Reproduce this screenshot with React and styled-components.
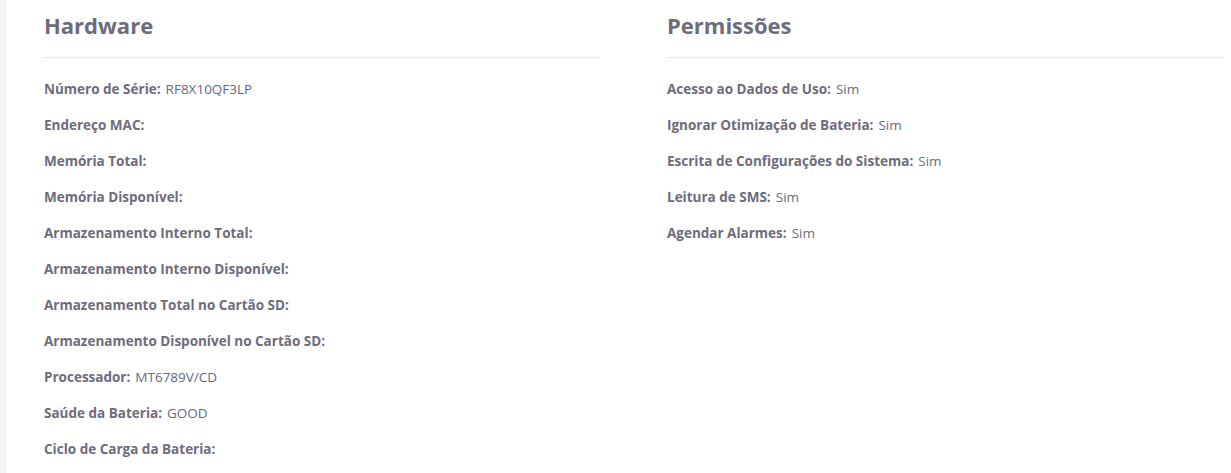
import styled, { createGlobalStyle } from "styled-components";

const GlobalStyle = createGlobalStyle`
  html, body {
    margin: 0;
    padding: 0;
    background: #ffffff;
  }
  body {
    font-family: "Open Sans", "Liberation Sans", sans-serif;
  }
`

const Page = styled.div`
  display: flex;
  min-height: 473px;
  background: #ffffff;
`

const SideStrip = styled.div`
  width: 6px;
  flex-shrink: 0;
  background: #f3f3f7;
`

const Columns = styled.div`
  flex: 1;
  display: grid;
  grid-template-columns: 556px 557px;
  column-gap: 67px;
  padding-left: 38px;
`

const Section = styled.section`
  display: flex;
  flex-direction: column;
`

const Title = styled.h2`
  margin: 0;
  padding-top: 10px;
  height: 57px;
  box-sizing: border-box;
  font-size: 22px;
  line-height: 30px;
  font-weight: 700;
  color: #6e6b7b;
`

const Divider = styled.hr`
  margin: 0;
  border: none;
  border-top: 1px solid #e6e6e9;
`

const List = styled.div`
  display: flex;
  flex-direction: column;
  padding-top: 13px;
`

const Row = styled.div`
  height: 36px;
  display: flex;
  align-items: center;
  font-size: 13.5px;
  color: #6e6b7b;
`

const Label = styled.span`
  font-weight: 700;
  margin-right: 5px;
`

const Value = styled.span`
  font-weight: 400;
  color: ${({ $tone }) => ($tone === "blue" ? "#5e6b82" : "#6e6b7b")};
`

const hardware = [
  ["Número de Série:", "RF8X10QF3LP"],
  ["Endereço MAC:", ""],
  ["Memória Total:", ""],
  ["Memória Disponível:", ""],
  ["Armazenamento Interno Total:", ""],
  ["Armazenamento Interno Disponível:", ""],
  ["Armazenamento Total no Cartão SD:", ""],
  ["Armazenamento Disponível no Cartão SD:", ""],
  ["Processador:", "MT6789V/CD"],
  ["Saúde da Bateria:", "GOOD"],
  ["Ciclo de Carga da Bateria:", ""],
]

const permissions = [
  ["Acesso ao Dados de Uso:", "Sim"],
  ["Ignorar Otimização de Bateria:", "Sim"],
  ["Escrita de Configurações do Sistema:", "Sim"],
  ["Leitura de SMS:", "Sim"],
  ["Agendar Alarmes:", "Sim"],
]

const InfoSection = ({ title, items, tone }) => (
  <Section>
    <Title>{title}</Title>
    <Divider />
    <List>
      {items.map(([label, value]) => (
        <Row key={label}>
          <Label>{label}</Label>
          {value && <Value $tone={tone}>{value}</Value>}
        </Row>
      ))}
    </List>
  </Section>
)

const App = () => {
  return (
    <>
      <GlobalStyle />
      <Page>
        <SideStrip />
        <Columns>
          <InfoSection title="Hardware" items={hardware} tone="blue" />
          <InfoSection title="Permissões" items={permissions} tone="gray" />
        </Columns>
      </Page>
    </>
  )
}

export default App
